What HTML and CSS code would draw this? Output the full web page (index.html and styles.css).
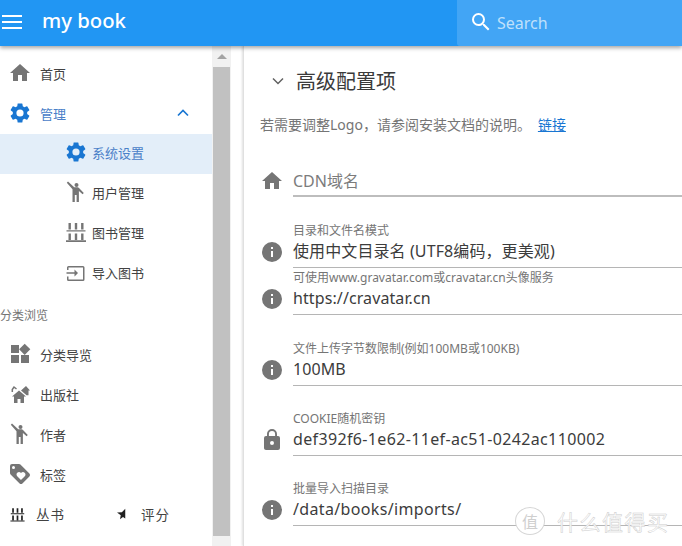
FILE: index.html
```html
<!DOCTYPE html>
<html lang="zh">
<head>
<meta charset="utf-8">
<title>my book</title>
<link rel="stylesheet" href="styles.css">
</head>
<body>
<svg class="defs" width="0" height="0" aria-hidden="true">
  <defs>
    <symbol id="i-home" viewBox="0 0 24 24"><path d="M10 20v-6h4v6h5v-8h3L12 3 2 12h3v8z"/></symbol>
    <symbol id="i-gear" viewBox="0 0 24 24"><path d="M19.14 12.94c.04-.3.06-.61.06-.94 0-.32-.02-.64-.07-.94l2.03-1.58a.49.49 0 0 0 .12-.61l-1.92-3.32a.488.488 0 0 0-.59-.22l-2.39.96c-.5-.38-1.03-.7-1.62-.94l-.36-2.54a.484.484 0 0 0-.48-.41h-3.84c-.24 0-.43.17-.47.41l-.36 2.54c-.59.24-1.13.57-1.62.94l-2.39-.96c-.22-.08-.47 0-.59.22L2.74 8.87c-.12.21-.08.47.12.61l2.03 1.58c-.05.3-.09.63-.09.94s.02.64.07.94l-2.03 1.58a.49.49 0 0 0-.12.61l1.92 3.32c.12.22.37.29.59.22l2.39-.96c.5.38 1.03.7 1.62.94l.36 2.54c.05.24.24.41.48.41h3.84c.24 0 .44-.17.47-.41l.36-2.54c.59-.24 1.13-.56 1.62-.94l2.39.96c.22.08.47 0 .59-.22l1.92-3.32c.12-.22.07-.47-.12-.61l-2.01-1.58zM12 15.6A3.6 3.6 0 1 1 12 8.4a3.6 3.6 0 0 1 0 7.2z"/></symbol>
    <symbol id="i-person" viewBox="0 0 24 24"><circle cx="12.500" cy="5" r="2"/><path d="M4 1.500 2.800 2.700 8.500 9.300V22h2.300v-7h1.800v7h2.300V11l3.700 3.300 1.200-1.300-4.800-5.100c-.4-.4-.9-.6-1.400-.6h-2.600c-.5 0-1-.2-1.300-.6z"/></symbol>
    <symbol id="i-books" viewBox="0 0 24 24"><path d="M4.500 3h2.400v6.500H4.500zM10.800 3h2.400v6.500h-2.400zM17.100 3h2.400v6.500h-2.400zM2.500 10.200h19v1.300h-19zM4.500 13.500h2.400v6.500H4.500zM10.800 13.500h2.400v6.500h-2.400zM17.100 13.500h2.400v6.500h-2.400zM2 20.300h20V22H2z"/></symbol>
    <symbol id="i-input" viewBox="0 0 24 24"><path d="M4.500 6H19a1.500 1.500 0 0 1 1.500 1.500v12A1.500 1.500 0 0 1 19 21H4.500A1.500 1.500 0 0 1 3 19.500v-3h1.500v3H19v-12H4.500V10H3V7.500A1.500 1.500 0 0 1 4.500 6zM10.500 16.500l3.500-3.500-3.500-3.500v2.700h-8v1.600h8z"/></symbol>
    <symbol id="i-dash" viewBox="0 0 24 24"><path d="M3 3h8v8H3zM13 13h8v8h-8zM3 13h8v8H3zM16.700 1.700 22.300 7.300 16.700 12.900 11.100 7.300z"/></symbol>
    <symbol id="i-pub" viewBox="0 0 24 24"><path d="M11 8.500 4 14.500H6V21h3.500v-4h3v4H16v-6.500h2z"/><path d="M18 4l-5 4.500 1.200 1.100 4.300 3.700h2V8.500H22z"/><path d="M4.300 10V7.500L6 5l2.500 2" fill="none" stroke="#757575" stroke-width="1.500"/></symbol>
    <symbol id="i-tag" viewBox="0 0 24 24"><path d="M21.410 11.580l-9-9A2 2 0 0 0 11 2H4a2 2 0 0 0-2 2v7c0 .55.22 1.050.59 1.420l9 9a2 2 0 0 0 2.820 0l7-7a2 2 0 0 0 0-2.840zM5.500 7A1.500 1.500 0 1 1 5.500 4a1.500 1.500 0 0 1 0 3zm11.270 7.270L13 18.040l-3.770-3.770A2.500 2.500 0 0 1 10.990 10c.69 0 1.320.28 1.770.74l.24.23.23-.24A2.500 2.500 0 0 1 17.510 12.500c0 .69-.28 1.320-.74 1.770z"/></symbol>
    <symbol id="i-info" viewBox="0 0 24 24"><path d="M12 2a10 10 0 1 0 0 20 10 10 0 0 0 0-20zm1 15h-2v-6h2zm0-8h-2V7h2z"/></symbol>
    <symbol id="i-lock" viewBox="0 0 24 24"><path d="M18 8h-1V6A5 5 0 0 0 7 6v2H6a2 2 0 0 0-2 2v10c0 1.100.9 2 2 2h12a2 2 0 0 0 2-2V10a2 2 0 0 0-2-2zm-6 9a2 2 0 1 1 0-4 2 2 0 0 1 0 4zm3.100-9H8.900V6a3.100 3.100 0 0 1 6.200 0z"/></symbol>
  </defs>
</svg>

<header class="topbar">
  <div class="brand">
    <svg class="menu-icon" viewBox="0 0 20 14"><path d="M0 0h20v2H0zM0 6h20v2H0zM0 12h20v2H0z"/></svg>
    <span class="title">my book</span>
  </div>
  <div class="search">
    <svg class="search-icon" viewBox="0 0 24 24"><path d="M15.500 14h-.79l-.28-.27A6.471 6.471 0 0 0 16 9.500 6.500 6.500 0 1 0 9.500 16c1.610 0 3.090-.59 4.230-1.570l.27.28v.79l5 4.990L20.490 19zm-6 0a4.500 4.500 0 1 1 0-9 4.500 4.500 0 0 1 0 9z"/></svg>
    <span class="search-text">Search</span>
  </div>
</header>

<div class="layout">
  <aside class="sidebar">
    <nav class="nav">
      <div class="row"><svg class="ic"><use href="#i-home"/></svg><span>首页</span></div>
      <div class="row row-blue"><svg class="ic"><use href="#i-gear"/></svg><span>管理</span>
        <svg class="chev" viewBox="0 0 12 8"><path d="M1 6.500 6 1.500l5 5" fill="none" stroke="currentColor" stroke-width="1.700"/></svg></div>
      <div class="row sub row-blue row-active"><svg class="ic"><use href="#i-gear"/></svg><span>系统设置</span></div>
      <div class="row sub"><svg class="ic"><use href="#i-person"/></svg><span>用户管理</span></div>
      <div class="row sub"><svg class="ic"><use href="#i-books"/></svg><span>图书管理</span></div>
      <div class="row sub"><svg class="ic"><use href="#i-input"/></svg><span>导入图书</span></div>
      <div class="section">分类浏览</div>
      <div class="row"><svg class="ic"><use href="#i-dash"/></svg><span>分类导览</span></div>
      <div class="row"><svg class="ic"><use href="#i-pub"/></svg><span>出版社</span></div>
      <div class="row"><svg class="ic"><use href="#i-person"/></svg><span>作者</span></div>
      <div class="row"><svg class="ic"><use href="#i-tag"/></svg><span>标签</span></div>
      <div class="row row-last">
        <svg class="ic-small"><use href="#i-books"/></svg><span class="series">丛书</span>
        <svg class="star" viewBox="0 0 12 14"><path d="M11 0v13l-3-2-4 3 1-5.500L0 5l6.500-.5z"/></svg><span class="rating">评分</span>
      </div>
    </nav>
    <div class="scrollbar">
      <div class="scroll-up"><span class="arrow"></span></div>
      <div class="scroll-thumb"></div>
    </div>
  </aside>

  <main class="main">
    <div class="panel-head">
      <svg class="expand" viewBox="0 0 12 8"><path d="M1 1.500 6 6.500l5-5" fill="none" stroke="currentColor" stroke-width="1.500"/></svg>
      <h1 class="panel-title">高级配置项</h1>
    </div>
    <p class="note">若需要调整Logo，请参阅安装文档的说明。<a class="link" href="#">链接</a></p>

    <div class="field field-first">
      <svg class="fi"><use href="#i-home"/></svg>
      <div class="box box-empty"><span class="placeholder">CDN域名</span></div>
    </div>
    <div class="field field-gap">
      <svg class="fi"><use href="#i-info"/></svg>
      <div class="box"><label class="lab">目录和文件名模式</label><div class="val">使用中文目录名 (UTF8编码，更美观)</div></div>
    </div>
    <div class="field">
      <svg class="fi"><use href="#i-info"/></svg>
      <div class="box"><label class="lab">可使用www.gravatar.com或cravatar.cn头像服务</label><div class="val">https://cravatar.cn</div></div>
    </div>
    <div class="field field-gap">
      <svg class="fi"><use href="#i-info"/></svg>
      <div class="box"><label class="lab">文件上传字节数限制(例如100MB或100KB)</label><div class="val">100MB</div></div>
    </div>
    <div class="field field-gap2">
      <svg class="fi"><use href="#i-lock"/></svg>
      <div class="box"><label class="lab">COOKIE随机密钥</label><div class="val val-wide">def392f6-1e62-11ef-ac51-0242ac110002</div></div>
    </div>
    <div class="field field-gap2">
      <svg class="fi"><use href="#i-info"/></svg>
      <div class="box"><label class="lab">批量导入扫描目录</label><div class="val val-wide">/data/books/imports/</div></div>
    </div>
  </main>
</div>

<div class="watermark"><span class="wm-badge">值</span><span class="wm-text">什么值得买</span></div>
</body>
</html>
```
FILE: styles.css
```css
* { box-sizing: border-box; }
html, body { margin: 0; height: 100%; overflow: hidden; }
body {
  width: 682px; height: 546px; position: relative;
  font-family: "Noto Sans", "Noto Sans CJK SC", sans-serif;
  background: #fff; color: #424242;
  display: flex; flex-direction: column;
}
.defs { position: absolute; }

.topbar {
  height: 46px; flex: none; background: #2196f3; color: #fff;
  display: flex; position: relative; z-index: 2;
  box-shadow: 0 2px 4px rgba(0,0,0,.35);
}
.brand { width: 457px; display: flex; align-items: center; padding-left: 2px; }
.menu-icon { width: 20px; height: 14px; fill: #fff; margin-top: -3px; }
.title { font-size: 20.300px; font-weight: 500; margin-left: 20px; margin-top: -7px; }
.search {
  flex: 1; background: #42a5f5; display: flex; align-items: center;
  padding-left: 12px; border-bottom-left-radius: 3px;
}
.search-icon { width: 24px; height: 24px; fill: #fff; margin-top: -3px; }
.search-text { font-size: 16px; color: #bfe0fb; margin-left: 4px; }

.layout { flex: 1; display: flex; min-height: 0; }
.sidebar { width: 231px; flex: none; display: flex; background: #fff; }
.nav { width: 212px; flex: none; padding-top: 8px; overflow: hidden; }
.row {
  height: 40px; display: flex; align-items: center; padding: 0 0 2px 8px;
  font-size: 13px; color: #424242;
}
.row span { margin-left: 8px; }
.ic { width: 24px; height: 24px; fill: #757575; flex: none; }
.row-blue { color: #1976d2; }
.row-blue span { color: #4a80c8; }
.row-blue .ic { fill: #1976d2; }
.chev { width: 12px; height: 8px; margin-left: auto; margin-right: 23px; color: #1976d2; }
.sub { padding: 0 0 4px 64px; }
.sub span { margin-left: 4px; }
.row-active { background: #e3eef9; }
.section {
  height: 41px; display: flex; align-items: center;
  font-size: 12px; color: #757575;
}
.row-last { padding-left: 8.500px; }
.ic-small { width: 17px; height: 17px; fill: #212121; flex: none; }
.row-last .series { margin-left: 10.500px; font-size: 13.500px; letter-spacing: 1px; }
.star { width: 9px; height: 12px; fill: #212121; margin-left: 52px; }
.row-last .rating { margin-left: 15px; font-size: 13.500px; letter-spacing: 1px; }

.scrollbar { flex: 1; background: #f1f1f1; display: flex; flex-direction: column; padding: 0 1px; }
.scroll-up { height: 21px; display: flex; justify-content: center; align-items: center; }
.arrow { width: 0; height: 0; border: 5px solid transparent; border-top: 0; border-bottom-color: #a3a3a3; }
.scroll-thumb { height: 469px; background: #c1c1c1; }

.main {
  flex: 1; margin-left: 12px; padding-left: 16px; position: relative;
  border-left: 1px solid #e0e0e0; box-shadow: -1px 0 2px rgba(0,0,0,.12);
  overflow: hidden; background: #fff;
}
.panel-head { height: 36px; margin-top: 17px; display: flex; align-items: center; padding-left: 12px; }
.expand { width: 12px; height: 8px; color: #616161; }
.panel-title { margin: 2px 0 0 12px; font-size: 20px; font-weight: 400; color: #3a3a3a; line-height: 36px; }
.note { margin: 17px 0 0; font-size: 14px; color: #757575; line-height: 18px; white-space: nowrap; }
.link { color: #1976d2; margin-left: 7px; }

.field { display: flex; align-items: flex-end; }
.field-first { margin-top: 35px; }
.field-gap { margin-top: 24px; }
.field-gap2 { margin-top: 23px; }
.fi { width: 24px; height: 24px; fill: #757575; flex: none; margin: 0 9px 4px 0; }
.box {
  flex: 1; height: 47px; border-bottom: 1px solid #b5b5b5;
  display: flex; flex-direction: column; justify-content: flex-end;
}
.box-empty { height: 28px; border-bottom: 2px solid #bdbdbd; }
.lab { font-size: 12px; color: #757575; line-height: 15px; white-space: nowrap; }
.val { font-size: 16px; color: #3c3c3c; line-height: 27px; padding-bottom: 2px; white-space: nowrap; letter-spacing: .1px; }
.val-wide { letter-spacing: .35px; }
.placeholder { font-size: 16px; color: #7c7c7c; line-height: 28px; }

.watermark {
  position: absolute; left: 515px; top: 507px; height: 28px;
  display: flex; align-items: center; z-index: 3;
}
.wm-badge {
  width: 30px; height: 28px; border: 1px solid #d6d6d6; border-radius: 50%;
  font-size: 16px; display: flex; align-items: center; justify-content: center;
  color: #cfcfcf; background: #fff;
}
.wm-text {
  font-size: 21px; margin-left: 12px; color: #fff; letter-spacing: 1.500px;
  -webkit-text-stroke: .5px #cdcdcd;
}
```
